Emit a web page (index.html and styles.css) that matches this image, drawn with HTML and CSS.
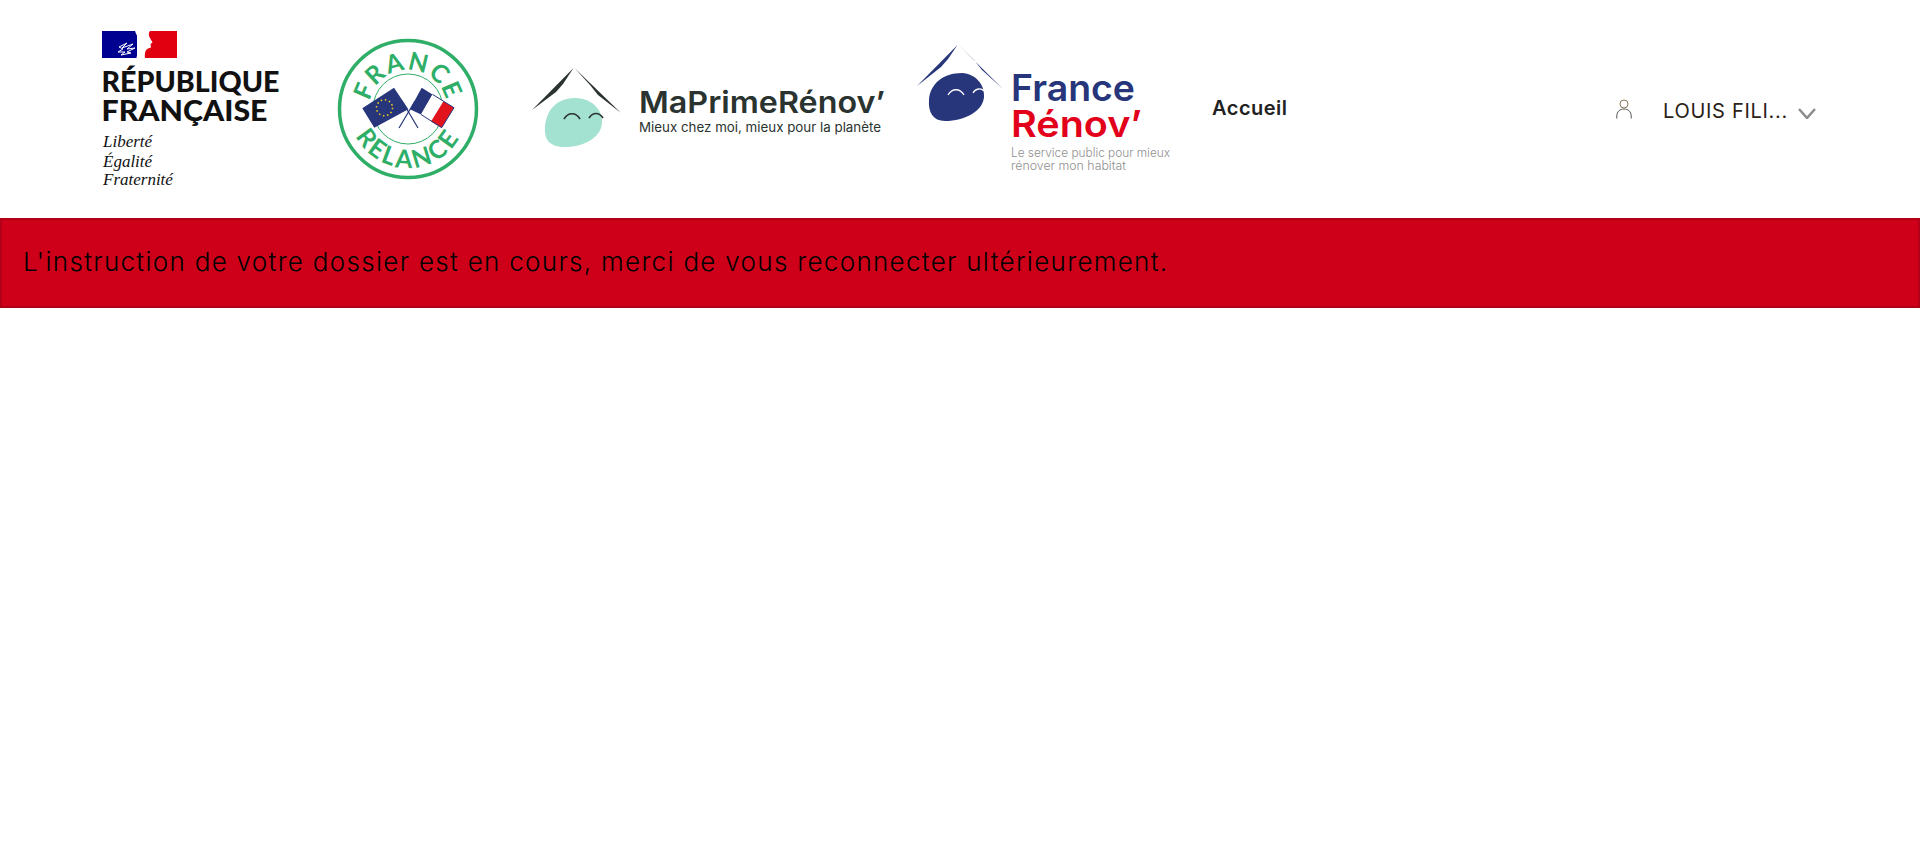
FILE: index.html
```html
<!DOCTYPE html>
<html lang="fr">
<head>
<meta charset="utf-8">
<title>MaPrimeRénov'</title>
<link rel="stylesheet" href="styles.css">
</head>
<body>
<header class="header">
  <svg class="logo logo-rf" viewBox="100 20 190 178" role="img" aria-label="République française">
    <rect x="102" y="31" width="35" height="27" fill="#000091"/>
    <rect x="143" y="31" width="34" height="27" fill="#e1000f"/>
    <path d="M135 31H150C148 34 149 36 150 38L152.500 42.500 150.500 44 151 47.500 148 48.500C145 50 144.500 54 145 58H136.500C137 53 140 50 141 46 141.500 42 137 37 135 31Z" fill="#fff"/>
    <path d="M119 47L127 43 122 48 133 44 127 49 135 48 127 52 131 53 121 55 125 52 118 52 123 49Z" fill="none" stroke="#fff" stroke-width="1"/>
    <text class="rf-name" x="101.500" y="92" textLength="178" lengthAdjust="spacingAndGlyphs">RÉPUBLIQUE</text>
    <text class="rf-name" x="101.500" y="121" textLength="166" lengthAdjust="spacingAndGlyphs">FRANÇAISE</text>
    <text class="rf-motto" x="103" y="147">Liberté</text>
    <text class="rf-motto" x="103" y="167">Égalité</text>
    <text class="rf-motto" x="103" y="185">Fraternité</text>
  </svg>
  <svg class="logo logo-relance" viewBox="336 36 144 144" role="img" aria-label="France Relance">
    <defs>
      <path id="arc-top" d="M408 147A39 39 0 1 1 408.010 147"/>
      <path id="arc-bottom" d="M349 108A59 59 0 0 0 467 108"/>
    </defs>
    <circle cx="408" cy="108" r="68.500" fill="none" stroke="#2fae67" stroke-width="3.500"/>
    <circle cx="408" cy="108" r="35" fill="none" stroke="#2fae67" stroke-width="1"/>
    <text class="relance-text"><textPath href="#arc-top" startOffset="50%" text-anchor="middle">FRANCE</textPath></text>
    <text class="relance-text relance-low"><textPath href="#arc-bottom" startOffset="50%" text-anchor="middle">RELANCE</textPath></text>
    <path d="M399 127L415 100M418 127L402 100" stroke="#27357a" stroke-width="1.200"/>
    <path d="M362.300 107.300L394 86.700 408.300 108.300 374.300 126.700Z" fill="#27357a"/>
    <circle cx="384.500" cy="106.800" r="8" fill="none" stroke="#f2d21c" stroke-width="1.500" stroke-dasharray="1.500 2.700"/>
    <path d="M421.700 86.700L432.500 93.400 421 113.500 410 108.300Z" fill="#27357a"/>
    <path d="M432.500 93.400L443.500 100.200 431 120.500 421 113.500Z" fill="#fff"/>
    <path d="M443.500 100.200L454 106.700 441.700 126.700 431 120.500Z" fill="#e1141d"/>
    <path d="M432.500 93.400L454 106.700 441.700 126.700 421 113.500" fill="none" stroke="#27357a" stroke-width="1"/>
  </svg>
  <svg class="logo logo-mpr" viewBox="528 60 366 98" role="img" aria-label="MaPrimeRénov'">
    <path d="M573.500 68L532 110 556 92 563 84Z" fill="#2a332f"/>
    <path d="M574.500 68L621 113 598 95 590 85Z" fill="#2a332f"/>
    <path d="M545 127C546 112 555 98 575 98 592 98 603 110 602 123 601 137 585 147 565 147 550 147 544 140 545 127Z" fill="#a3e2d0"/>
    <path d="M564 119C568 112 576 112 580 119M589 118C593 112 599 112 603 118" fill="none" stroke="#2a332f" stroke-width="1.700"/>
    <text class="mpr-name" x="639" y="113" textLength="246" lengthAdjust="spacingAndGlyphs">MaPrimeRénov’</text>
    <text class="mpr-sub" x="639" y="132" textLength="242" lengthAdjust="spacingAndGlyphs">Mieux chez moi, mieux pour la planète</text>
  </svg>
  <svg class="logo logo-fr" viewBox="913 40 262 138" role="img" aria-label="France Rénov'">
    <path d="M957.500 45L917 86 941 67 948 59Z" fill="#27357a"/>
    <path d="M958.500 45L1003 89 982 70 974 60Z" fill="#27357a"/>
    <path d="M929 100C930 84 943 73 962 73 976 74 985 85 984 97 983 111 965 121 945 121 933 121 928 112 929 100Z" fill="#27357a"/>
    <path d="M948 95C952 88 960 88 964 95M973 93C976 88 981 88 984 91" fill="none" stroke="#fff" stroke-width="1.300"/>
    <text class="fr-name" x="1011" y="101" textLength="124" lengthAdjust="spacingAndGlyphs">France</text>
    <text class="fr-renov" x="1011" y="137" textLength="131" lengthAdjust="spacingAndGlyphs">Rénov’</text>
    <text class="fr-sub" x="1011" y="157" textLength="159" lengthAdjust="spacingAndGlyphs">Le service public pour mieux</text>
    <text class="fr-sub" x="1011" y="170" textLength="115" lengthAdjust="spacingAndGlyphs">rénover mon habitat</text>
  </svg>
  <a class="nav-link" href="#">Accueil</a>
  <div class="user">
    <svg class="user-icon" viewBox="0 0 16 20" aria-hidden="true">
      <circle cx="8" cy="5" r="4" fill="none" stroke="#8a7a5c" stroke-width="1"/>
      <path d="M.8 19.500V17C.8 12.500 4 10 8 10S15.200 12.500 15.200 17V19.500" fill="none" stroke="#555" stroke-width="1"/>
    </svg>
    <span class="user-name">LOUIS FILI...</span>
    <svg class="chevron" viewBox="0 0 18 11" aria-hidden="true">
      <path d="M1 1L9 10 17 1" fill="none" stroke="#8c8c8c" stroke-width="2.500"/>
    </svg>
  </div>
</header>
<main>
  <div class="alert">L'instruction de votre dossier est en cours, merci de vous reconnecter ultérieurement.</div>
</main>
</body>
</html>
```

FILE: styles.css
```css
* {
  box-sizing: border-box;
}

html,
body {
  margin: 0;
  background: #fff;
}

body {
  font-family: "Inter", "Liberation Sans", sans-serif;
  color: #222;
}

.header {
  display: flex;
  align-items: center;
  height: 218px;
  padding: 0 104px 0 100px;
}

.logo {
  display: block;
  flex: none;
}

.logo-rf {
  width: 190px;
  height: 178px;
}

.logo-relance {
  width: 144px;
  height: 144px;
  margin-left: 46px;
}

.logo-mpr {
  width: 366px;
  height: 98px;
  margin-left: 48px;
}

.logo-fr {
  width: 262px;
  height: 138px;
  margin-left: 19px;
}

.rf-name {
  font: 900 28px "Lato", sans-serif;
  fill: #111;
}

.rf-motto {
  font: italic 400 17px "Liberation Serif", serif;
  fill: #111;
}

.relance-text {
  font: 700 25px "Lato", sans-serif;
  letter-spacing: 1.500px;
  fill: #2fae67;
}

.relance-low {
  letter-spacing: 2.500px;
}

.mpr-name {
  font: 600 30px "Inter", sans-serif;
  fill: #2a332f;
}

.mpr-sub {
  font: 400 13px "Inter", sans-serif;
  fill: #2a332f;
}

.fr-name,
.fr-renov {
  font: 600 37px "Inter", sans-serif;
}

.fr-name {
  fill: #27357a;
}

.fr-renov {
  fill: #e2001a;
}

.fr-sub {
  font: 300 12.500px "Inter", sans-serif;
  fill: #8f8f8f;
}

.nav-link {
  margin: 0 0 2px 37px;
  font-size: 20px;
  font-weight: 600;
  line-height: 24px;
  letter-spacing: 0.500px;
  color: #222;
  text-decoration: none;
}

.user {
  display: flex;
  align-items: center;
  margin-left: auto;
  padding-top: 4px;
}

.user-icon {
  width: 16px;
  height: 20px;
  margin-bottom: 4px;
}

.user-name {
  margin-left: 31px;
  font-size: 20px;
  line-height: 24px;
  letter-spacing: 0.700px;
  color: #2a2218;
}

.chevron {
  width: 18px;
  height: 11px;
  margin: 4px 0 0 10px;
}

.alert {
  height: 90px;
  padding: 0 21px;
  border: 2px solid #b20018;
  background: #ce0019;
  color: #000;
  font-size: 26px;
  font-weight: 300;
  line-height: 84px;
  letter-spacing: 1.300px;
  white-space: nowrap;
}
```
